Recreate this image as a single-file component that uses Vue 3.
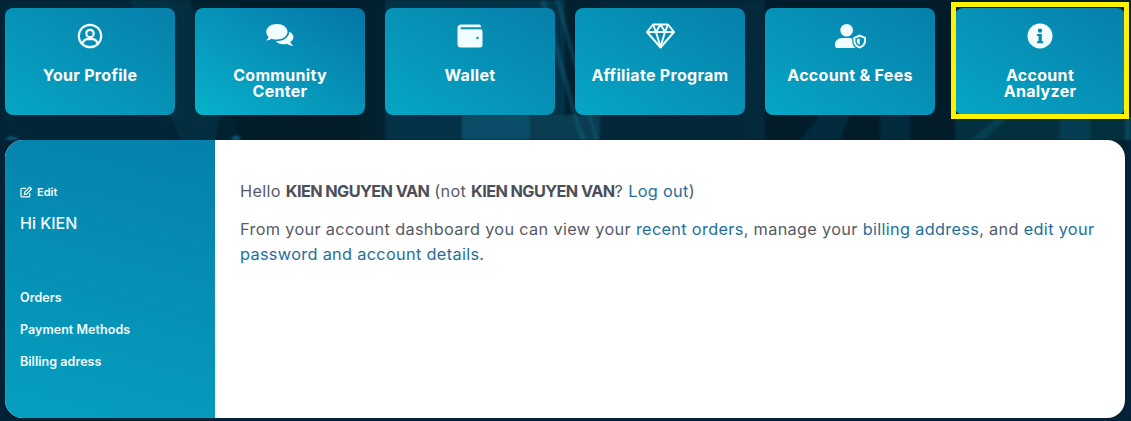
<script setup>
const cards = [
  { key: 'profile', lines: ['Your Profile'] },
  { key: 'community', lines: ['Community', 'Center'] },
  { key: 'wallet', lines: ['Wallet'] },
  { key: 'affiliate', lines: ['Affiliate Program'] },
  { key: 'fees', lines: ['Account & Fees'] },
  { key: 'analyzer', lines: ['Account', 'Analyzer'], active: true },
]
</script>

<template>
  <div class="page">
    <svg class="backdrop" viewBox="0 0 1131 421" width="1131" height="421" aria-hidden="true">
      <rect width="1131" height="421" fill="#03202e" />
      <path d="M0 0h175v140H0z" fill="#032a3c" opacity=".7" />
      <path d="M130 0l50 140h60L190 0z" fill="#03384d" opacity=".6" />
      <path d="M240 0h120v140H215z" fill="#021a28" opacity=".6" />
      <path d="M385 0h180v140H385z" fill="#033247" />
      <path d="M462 115h68v25h-68z" fill="#0b4c66" />
      <path d="M530 115h70v25h-70z" fill="#0a3d52" />
      <path d="M540 0l40 140h4L546 0zM555 0l40 140h3L560 0zM572 115l12 25h3l-12-25z" fill="#1b6e8a" opacity=".35" />
      <path d="M745 0h20v140h-20z" fill="#04283a" />
      <path d="M600 0h165v140H600z" fill="#04293b" opacity=".8" />
      <path d="M765 0h190v140H765z" fill="#021c2a" />
      <path d="M820 115l-20 25h40l10-25zM880 115h30v25h-30z" fill="#033042" opacity=".8" />
      <path d="M955 115h176v25H955z" fill="#03303f" />
      <path d="M970 140l30-25h12l-30 25zM1060 115h30v25h-30z" fill="#064259" opacity=".8" />
      <path d="M1125 120l6-4v24h-6z" fill="#0a5068" opacity=".7" />
      <path d="M0 418h1131v3H0zM1125 140h6v281h-6zM0 140h5v281H0z" fill="#04233a" />
      <path d="M5 140q5-6 12-2l2 2zM232 137l6-2 3 5h-9z" fill="#0a5a78" />
    </svg>

    <nav class="cards">
      <a v-for="c in cards" :key="c.key" class="card" :class="[c.key, { active: c.active }]">
        <svg v-if="c.key === 'profile'" class="icon" viewBox="0 0 26 26" fill="none" stroke="#f2fdff" stroke-width="2.200">
          <circle cx="13" cy="13" r="11.200" />
          <circle cx="13" cy="10.500" r="3.700" />
          <path d="M5.500 20.500c1-3 3-4.300 5-4.300h5c2 0 4 1.300 5 4.300" />
        </svg>
        <svg v-else-if="c.key === 'community'" class="icon wide" viewBox="0 0 30 24" fill="#f2fdff">
          <path d="M11.500.5C5.700.5 1.200 3.800 1.200 8c0 1.900.9 3.600 2.300 5-.5 1.600-1.500 2.500-2.500 3.300 1.900 0 4-.8 5.300-1.700 1.500.6 3.200.9 5.200.9 5.800 0 10.300-3.300 10.300-7.500S17.300.5 11.500.5z" />
          <path d="M23.500 7.500c.3 4.800-4.400 9.300-11.500 9.500-.6 0-1 0-1.500-.1 1.500 2 4.100 3.200 7 3.200 1.400 0 2.600-.2 3.700-.7 1.300.9 3.300 1.900 6.300 2.100-1-.9-2.700-2-3-3.700 1.800-1.300 3-3 3-4.900 0-2.100-1.600-4-4-5z" />
        </svg>
        <svg v-else-if="c.key === 'wallet'" class="icon" viewBox="0 0 26 24" fill="#f2fdff">
          <path d="M4 .5h18a2 2 0 0 1 2 2v.8H4.500a1 1 0 0 0 0 2H23.500a2 2 0 0 1 2 2v13.700a2.500 2.500 0 0 1-2.500 2.500H4A3.500 3.500 0 0 1 .5 20V4A3.500 3.500 0 0 1 4 .5z" />
          <circle cx="20.500" cy="14" r="1.200" fill="#0a88ae" />
        </svg>
        <svg v-else-if="c.key === 'affiliate'" class="icon wide" viewBox="0 0 30 26" fill="none" stroke="#f2fdff" stroke-width="2" stroke-linejoin="round">
          <path d="M7.500 1.500h15l6 7.500L15 24.500 1.500 9z" />
          <path d="M1.500 9h27M10.500 9L15 24l4.500-15-4.500-7.500zM7.500 1.500l3 7.500M22.500 1.500l-3 7.500" />
        </svg>
        <svg v-else-if="c.key === 'fees'" class="icon wide" viewBox="0 0 32 26" fill="#f2fdff">
          <circle cx="12" cy="7" r="6.500" />
          <path d="M0 22.500c0-4.500 3-7.500 7-7.500h8c1 0 2 .2 2.800.6v2.400c0 3.200 1.300 6 3.700 7.500H2.500A2.500 2.500 0 0 1 0 22.500z" />
          <path fill-rule="evenodd" d="M25.500 11.500l6.500 2.700v3.800c0 4-2.600 6.800-6.500 8-3.900-1.200-6.500-4-6.500-8v-3.800zm0 2.200l-4.500 1.900V18c0 2.800 1.800 4.700 4.500 5.800 2.700-1.100 4.500-3 4.500-5.800v-2.400z" />
          <path d="M25.500 15.200l-3 1.300V18c0 2.200 1.200 3.500 3 4.400z" />
        </svg>
        <svg v-else class="icon" viewBox="0 0 26 26">
          <circle cx="13" cy="13" r="12.500" fill="#f2fdff" />
          <circle cx="13" cy="7.600" r="2.200" fill="#0a88ae" />
          <path d="M10 11h4.800v7.200H16.300v2H10v-2h1.600v-5.200H10z" fill="#0a88ae" />
        </svg>
        <span class="label"><span v-for="l in c.lines" :key="l" class="line">{{ l }}</span></span>
      </a>
    </nav>

    <section class="panel">
      <aside class="side">
        <a class="edit">
          <svg viewBox="0 0 14 13" width="13" height="12" fill="none" stroke="#f2fdff" stroke-width="1.300">
            <path d="M10.500 7.500v3.300a1 1 0 0 1-1 1H2a1 1 0 0 1-1-1V3.500a1 1 0 0 1 1-1h4.500" />
            <path d="M5 6.800L10.500 1.300l1.900 1.900L7 8.800l-2.300.4z" />
          </svg>
          Edit
        </a>
        <div class="hi">Hi KIEN</div>
        <ul class="menu">
          <li>Orders</li>
          <li>Payment Methods</li>
          <li>Billing adress</li>
        </ul>
      </aside>
      <div class="content">
        <p>Hello <strong>KIEN NGUYEN VAN</strong> (not <strong>KIEN NGUYEN VAN</strong>? <a>Log out</a>)</p>
        <p>From your account dashboard you can view your <a>recent orders</a>, manage your <a>billing address</a>, and <a>edit your password and account details</a>.</p>
      </div>
    </section>
  </div>
</template>

<style>
html, body { margin: 0; background: #03202e; }
</style>

<style scoped>
.page {
  position: relative;
  width: 1131px;
  height: 421px;
  box-sizing: border-box;
  padding: 8px 6px 3px 5px;
  overflow: hidden;
  font-family: "Inter", "Liberation Sans", sans-serif;
}
.backdrop { position: absolute; inset: 0; display: block; filter: blur(1px); }
.cards { position: relative; display: flex; gap: 20px; }
.card {
  position: relative;
  width: 170px;
  height: 107px;
  flex: none;
  box-sizing: border-box;
  padding-top: 15px;
  border-radius: 8px;
  background: linear-gradient(to top right, #06a6c4, #067fab);
  color: #fff;
  display: flex;
  flex-direction: column;
  align-items: center;
  text-decoration: none;
}
.card.community { background: linear-gradient(to top right, #08b2cb, #0575a6); }
.card.active::after {
  content: "";
  position: absolute;
  inset: -6px -4px -4px -4px;
  border: 5px solid #fff200;
}
.icon { width: 26px; height: 26px; flex: none; }
.icon.wide { width: 31px; }
.label {
  margin-top: 18px;
  text-align: center;
  font-weight: 700;
  font-size: 16px;
  letter-spacing: .3px;
  line-height: 16px;
  display: flex;
  flex-direction: column;
}
.panel {
  position: relative;
  margin-top: 25px;
  height: 278px;
  display: flex;
  background: #fff;
  border-radius: 18px;
  overflow: hidden;
}
.side {
  width: 210px;
  flex: none;
  box-sizing: border-box;
  padding: 44px 15px 0;
  background: linear-gradient(15deg, #069fc0, #0580ab);
  color: #f2fdff;
}
.edit { display: flex; align-items: center; gap: 4px; font-size: 11px; font-weight: 600; line-height: 16px; }
.hi { margin-top: 12px; font-size: 16px; font-weight: 500; line-height: 22px; }
.menu { list-style: none; margin: 54px 0 0; padding: 0; font-size: 12.500px; font-weight: 600; letter-spacing: .05px; }
.menu li { height: 32px; line-height: 20px; }
.content {
  flex: 1;
  padding: 39px 25px 0;
  font-size: 16.300px;
  letter-spacing: .33px;
  line-height: 25px;
  color: #555a66;
}
.content p { margin: 0 0 13px; }
.content strong { font-weight: 700; color: #4c4f58; letter-spacing: -.6px; }
.content a { color: #1f6f9a; }
</style>
